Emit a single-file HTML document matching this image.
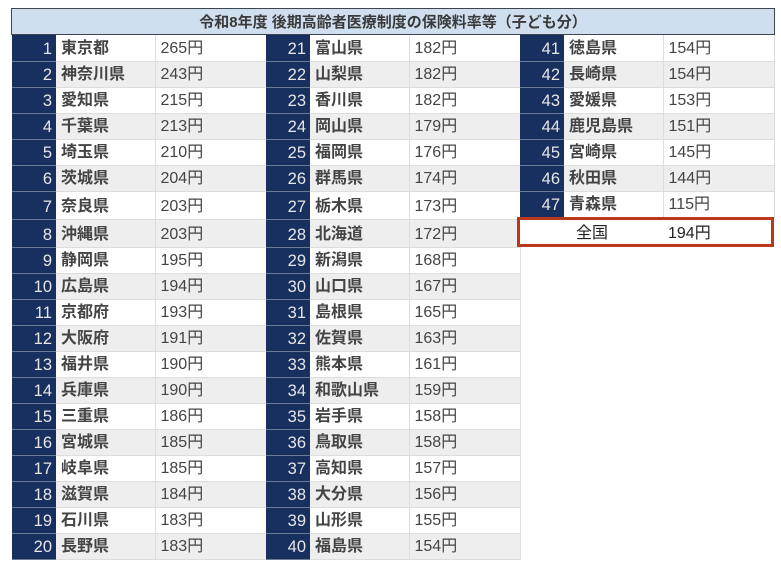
<!DOCTYPE html>
<html lang="ja">
<head>
<meta charset="utf-8">
<style>
html,body{margin:0;padding:0;background:#fff;width:781px;height:562px;overflow:hidden}
body{position:relative;font-family:"Liberation Sans","Noto Sans CJK JP",sans-serif;color:#444}
.head{position:absolute;left:11px;top:8px;width:762px;height:25px;background:#cfdff0;border:1px solid #3c4550;text-align:center;font-size:15px;font-weight:bold;line-height:27px;color:#3a3a3a}
table{position:absolute;top:35px;width:254px;border-collapse:collapse;table-layout:fixed}
td{box-sizing:border-box;padding:2px 0 0;height:26px;border-bottom:1px solid #ddd;font-size:16px;line-height:22px;white-space:nowrap;overflow:hidden}
tr:nth-child(even) td{background:#eee}
td.n{width:44px;background:#17305f!important;color:#e6e6e6;text-align:right;padding-right:4px;font-size:16.5px;border-bottom:1px solid #6b7a96}
td.p{width:99px;padding-left:5px;font-weight:bold;border-right:1px solid #ddd}
td.y{width:111px;padding-left:5px;border-right:1px solid #ddd}
tr.t td{height:28px;padding-top:4px}
.total{position:absolute;left:517px;top:217px;width:251px;height:24px;border:3px solid #b8391a;background:#fff;color:#222;font-size:16px;line-height:25px}
.total span{position:absolute;top:1px}
</style>
</head>
<body>
<div class="head">令和8年度 後期高齢者医療制度の保険料率等（子ども分）</div>
<table style="left:12px">
<tr><td class="n">1</td><td class="p">東京都</td><td class="y">265円</td></tr>
<tr><td class="n">2</td><td class="p">神奈川県</td><td class="y">243円</td></tr>
<tr><td class="n">3</td><td class="p">愛知県</td><td class="y">215円</td></tr>
<tr><td class="n">4</td><td class="p">千葉県</td><td class="y">213円</td></tr>
<tr><td class="n">5</td><td class="p">埼玉県</td><td class="y">210円</td></tr>
<tr><td class="n">6</td><td class="p">茨城県</td><td class="y">204円</td></tr>
<tr class="t"><td class="n">7</td><td class="p">奈良県</td><td class="y">203円</td></tr>
<tr class="t"><td class="n">8</td><td class="p">沖縄県</td><td class="y">203円</td></tr>
<tr><td class="n">9</td><td class="p">静岡県</td><td class="y">195円</td></tr>
<tr><td class="n">10</td><td class="p">広島県</td><td class="y">194円</td></tr>
<tr><td class="n">11</td><td class="p">京都府</td><td class="y">193円</td></tr>
<tr><td class="n">12</td><td class="p">大阪府</td><td class="y">191円</td></tr>
<tr><td class="n">13</td><td class="p">福井県</td><td class="y">190円</td></tr>
<tr><td class="n">14</td><td class="p">兵庫県</td><td class="y">190円</td></tr>
<tr><td class="n">15</td><td class="p">三重県</td><td class="y">186円</td></tr>
<tr><td class="n">16</td><td class="p">宮城県</td><td class="y">185円</td></tr>
<tr><td class="n">17</td><td class="p">岐阜県</td><td class="y">185円</td></tr>
<tr><td class="n">18</td><td class="p">滋賀県</td><td class="y">184円</td></tr>
<tr><td class="n">19</td><td class="p">石川県</td><td class="y">183円</td></tr>
<tr><td class="n">20</td><td class="p">長野県</td><td class="y">183円</td></tr>
</table>
<table style="left:266px">
<tr><td class="n">21</td><td class="p">富山県</td><td class="y">182円</td></tr>
<tr><td class="n">22</td><td class="p">山梨県</td><td class="y">182円</td></tr>
<tr><td class="n">23</td><td class="p">香川県</td><td class="y">182円</td></tr>
<tr><td class="n">24</td><td class="p">岡山県</td><td class="y">179円</td></tr>
<tr><td class="n">25</td><td class="p">福岡県</td><td class="y">176円</td></tr>
<tr><td class="n">26</td><td class="p">群馬県</td><td class="y">174円</td></tr>
<tr class="t"><td class="n">27</td><td class="p">栃木県</td><td class="y">173円</td></tr>
<tr class="t"><td class="n">28</td><td class="p">北海道</td><td class="y">172円</td></tr>
<tr><td class="n">29</td><td class="p">新潟県</td><td class="y">168円</td></tr>
<tr><td class="n">30</td><td class="p">山口県</td><td class="y">167円</td></tr>
<tr><td class="n">31</td><td class="p">島根県</td><td class="y">165円</td></tr>
<tr><td class="n">32</td><td class="p">佐賀県</td><td class="y">163円</td></tr>
<tr><td class="n">33</td><td class="p">熊本県</td><td class="y">161円</td></tr>
<tr><td class="n">34</td><td class="p">和歌山県</td><td class="y">159円</td></tr>
<tr><td class="n">35</td><td class="p">岩手県</td><td class="y">158円</td></tr>
<tr><td class="n">36</td><td class="p">鳥取県</td><td class="y">158円</td></tr>
<tr><td class="n">37</td><td class="p">高知県</td><td class="y">157円</td></tr>
<tr><td class="n">38</td><td class="p">大分県</td><td class="y">156円</td></tr>
<tr><td class="n">39</td><td class="p">山形県</td><td class="y">155円</td></tr>
<tr><td class="n">40</td><td class="p">福島県</td><td class="y">154円</td></tr>
</table>
<table style="left:520px">
<tr><td class="n">41</td><td class="p">徳島県</td><td class="y">154円</td></tr>
<tr><td class="n">42</td><td class="p">長崎県</td><td class="y">154円</td></tr>
<tr><td class="n">43</td><td class="p">愛媛県</td><td class="y">153円</td></tr>
<tr><td class="n">44</td><td class="p">鹿児島県</td><td class="y">151円</td></tr>
<tr><td class="n">45</td><td class="p">宮崎県</td><td class="y">145円</td></tr>
<tr><td class="n">46</td><td class="p">秋田県</td><td class="y">144円</td></tr>
<tr><td class="n">47</td><td class="p">青森県</td><td class="y">115円</td></tr>
</table>
<div class="total"><span style="left:56px">全国</span><span style="left:148px">194円</span></div>
</body>
</html>
